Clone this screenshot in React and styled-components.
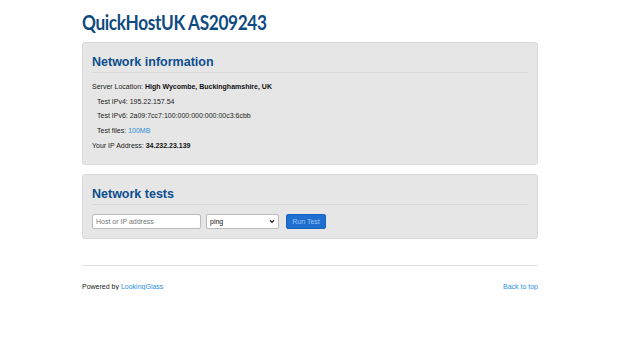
import React from 'react';
import styled, {createGlobalStyle} from 'styled-components';

const GlobalStyle = createGlobalStyle`
  html, body {
    margin: 0;
    padding: 0;
    background: #fff;
  }
  body {
    font-family: "Liberation Sans", Arial, sans-serif;
    color: #222;
  }
`;

const Container = styled.div`
  width: 456px;
  margin: 0 auto;
  padding-top: 9px;
`;

const Title = styled.h1`
  margin: 0 0 7px 0;
  font-family: Lato, "Liberation Sans", sans-serif;
  font-weight: 700;
  font-size: 20px;
  line-height: 26px;
  color: #0f4a80;
  letter-spacing: -0.4px;
  transform: scaleX(0.86);
  transform-origin: left center;
  white-space: nowrap;
`;

const Panel = styled.div`
  background: #e6e6e6;
  border: 1px solid #dadada;
  border-radius: 3px;
  padding: 9px 9px 9px 9px;
  margin-bottom: 9px;
`;

const PanelHeading = styled.h2`
  margin: 0;
  padding: 2px 0 2px 0;
  font-size: 12.5px;
  line-height: 16px;
  font-weight: 700;
  color: #0d4e8e;
  border-bottom: 1px solid #d8d8d8;
`;

const InfoList = styled.div`
  padding: 7px 0 1px 0;
  font-size: 7px;
`;

const InfoRow = styled.div`
  line-height: 14.7px;
  padding-left: ${props => props.indent ? '5px' : '0'};
  color: #222;

  b {
    color: #111;
  }
`;

const Link = styled.a`
  color: #2b8fe0;
  text-decoration: none;
`;

const Form = styled.div`
  display: flex;
  align-items: center;
  gap: 5px;
  padding-top: 9px;
`;

const TextInput = styled.input`
  box-sizing: border-box;
  width: 109px;
  height: 15px;
  padding: 0 3px;
  font-family: "Liberation Sans", Arial, sans-serif;
  font-size: 7px;
  border: 1px solid #bbb;
  border-radius: 2px;
  background: #fff;
  outline: none;

  &::placeholder {
    color: #777;
  }
`;

const Select = styled.div`
  box-sizing: border-box;
  width: 73px;
  height: 15px;
  padding: 0 3px;
  font-size: 7px;
  border: 1px solid #bbb;
  border-radius: 2px;
  background: #fff;
  display: flex;
  align-items: center;
  justify-content: space-between;
  color: #111;
`;

const Button = styled.button`
  box-sizing: border-box;
  margin-left: 2px;
  width: 40px;
  height: 15px;
  padding: 0;
  font-family: "Liberation Sans", Arial, sans-serif;
  font-size: 7px;
  color: #9cc4f0;
  background: #1f6fd1;
  border: 1px solid #1a62bb;
  border-radius: 2px;
`;

const Footer = styled.footer`
  margin-top: 26px;
  border-top: 1px solid #e2e2e2;
  padding-top: 17px;
  display: flex;
  justify-content: space-between;
  font-size: 7px;
  color: #222;
`;

function Chevron() {
  return (
    <svg width="6" height="5" viewBox="0 0 6 5">
      <path d="M1 1.2 L3 3.4 L5 1.2" fill="none" stroke="#222" strokeWidth="1.3" />
    </svg>
  );
}

export default function App() {
  return (
    <>
      <GlobalStyle />
      <Container>
        <Title>QuickHostUK AS209243</Title>

        <Panel>
          <PanelHeading>Network information</PanelHeading>
          <InfoList>
            <InfoRow>Server Location: <b>High Wycombe, Buckinghamshire, UK</b></InfoRow>
            <InfoRow indent>Test IPv4: 195.22.157.54</InfoRow>
            <InfoRow indent>Test IPv6: 2a09:7cc7:100:000:000:000:00c3:6cbb</InfoRow>
            <InfoRow indent>Test files: <Link href="#">100MB</Link></InfoRow>
            <InfoRow>Your IP Address: <b>34.232.23.139</b></InfoRow>
          </InfoList>
        </Panel>

        <Panel>
          <PanelHeading>Network tests</PanelHeading>
          <Form>
            <TextInput placeholder="Host or IP address" />
            <Select>
              <span>ping</span>
              <Chevron />
            </Select>
            <Button>Run Test</Button>
          </Form>
        </Panel>

        <Footer>
          <span>Powered by <Link href="#">LookingGlass</Link></span>
          <Link href="#">Back to top</Link>
        </Footer>
      </Container>
    </>
  );
}
